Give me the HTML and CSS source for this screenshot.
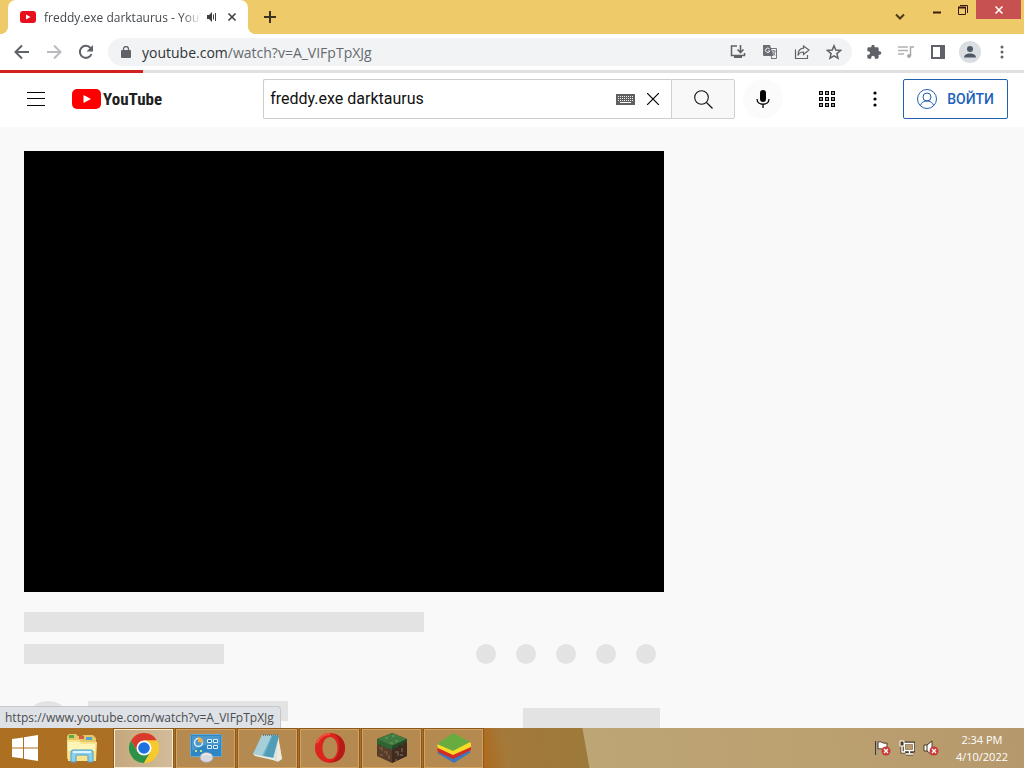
FILE: index.html
```html
<!DOCTYPE html>
<html lang="ru">

<head>
    <meta charset="UTF-8">
    <meta name="viewport" content="width=device-width, initial-scale=1.0">
    <title>freddy.exe darktaurus - YouTube</title>
    <link rel="stylesheet" href="styles.css">
</head>

<body>

    <div class="tabstrip">
        <div class="tab">
            <svg class="favicon" width="16" height="12" viewBox="0 0 16 12"><rect width="16" height="12" rx="3" fill="#e8101c"/><path d="M6 3.5v5L10.500 6z" fill="#fff"/></svg>
            <span class="tabTitle">freddy.exe darktaurus - YouTube</span>
            <button class="iconButton tabButton" aria-label="Mute tab">
                <svg width="12" height="12" viewBox="0 0 12 12"><path d="M1 4h2l3-3v10L3 8H1z" fill="#3c4043"/><path d="M7.500 3.500v5M9.500 2v8" stroke="#3c4043" fill="none"/></svg>
            </button>
            <button class="iconButton tabButton" aria-label="Close tab">
                <svg width="10" height="10" viewBox="0 0 10 10"><path d="M1.500 1.500l7 7M8.500 1.500l-7 7" stroke="#3c4043" stroke-width="1.600"/></svg>
            </button>
        </div>
        <button class="iconButton newTab" aria-label="New tab">
            <svg width="12" height="12" viewBox="0 0 12 12"><path d="M6 0v12M0 6h12" stroke="#3b3222" stroke-width="2"/></svg>
        </button>
        <div class="windowControls">
            <button class="iconButton tabSearch" aria-label="Search tabs">
                <svg width="12" height="8" viewBox="0 0 12 8"><path d="M2 1.500l4 4 4-4" fill="none" stroke="#4c3a18" stroke-width="2"/></svg>
            </button>
            <button class="windowButton" aria-label="Minimize">
                <svg width="10" height="10" viewBox="0 0 10 10"><path d="M1 7.500h8" stroke="#3a1a10" stroke-width="2"/></svg>
            </button>
            <button class="windowButton" aria-label="Restore">
                <svg width="12" height="10" viewBox="0 0 12 10"><path d="M1.500 2.500h7v7h-7zM3 .5h7.500V8" fill="none" stroke="#3a1a10"/><path d="M1 2.500h8" stroke="#3a1a10" stroke-width="2"/></svg>
            </button>
            <button class="windowButton closeWindow" aria-label="Close">
                <svg width="10" height="10" viewBox="0 0 10 10"><path d="M1.500 1.500l7 7M8.500 1.500l-7 7" stroke="#fff" stroke-width="1.600"/></svg>
            </button>
        </div>
    </div>

    <div class="toolbar">
        <button class="iconButton" aria-label="Back">
            <svg width="16" height="16" viewBox="0 0 16 16"><path d="M15 8H2M8 1.500L1.500 8 8 14.500" fill="none" stroke="#5f6368" stroke-width="2"/></svg>
        </button>
        <button class="iconButton" aria-label="Forward">
            <svg width="16" height="16" viewBox="0 0 16 16"><path d="M1 8h13M8 1.500L14.500 8 8 14.500" fill="none" stroke="#b9bbbe" stroke-width="2"/></svg>
        </button>
        <button class="iconButton" aria-label="Reload">
            <svg width="16" height="16" viewBox="0 0 16 16"><path d="M13.500 10A6 6 0 1 1 12.500 4l1.500 1.500" fill="none" stroke="#5f6368" stroke-width="2"/><path d="M15 1v6.500H8.500z" fill="#5f6368"/></svg>
        </button>
        <div class="omnibox">
            <svg class="lock" width="10" height="12" viewBox="0 0 10 12"><rect y="4" width="10" height="8" rx="1" fill="#5f6368"/><path d="M2.500 5V3a2.500 2.500 0 0 1 5 0v2" fill="none" stroke="#5f6368" stroke-width="1.300"/></svg>
            <span class="url"><span class="urlHost">youtube.com</span>/watch?v=A_VIFpTpXJg</span>
            <button class="iconButton" aria-label="Install">
                <svg width="16" height="16" viewBox="0 0 16 16"><path d="M7 2H1.500v9.500h13V9" fill="none" stroke="#5f6368" stroke-width="1.500"/><path d="M4 12h8v2H4z" fill="#5f6368"/><path d="M10.500 1v7M7.500 5.500l3 3 3-3" fill="none" stroke="#5f6368" stroke-width="1.600"/></svg>
            </button>
            <button class="iconButton" aria-label="Translate">
                <svg width="16" height="16" viewBox="0 0 16 16"><path d="M8 4.500h6.500v10H9" fill="none" stroke="#72757a"/><path d="M1 1h7l3.500 11H2a1 1 0 0 1-1-1z" fill="#6b6e73"/><path d="M7.500 5A2.200 2.200 0 1 0 7.800 7H5.800" fill="none" stroke="#f1f3f4"/><path d="M9.500 7h4M11.500 6v1M13 7c0 2-1 3-2.500 4M10.500 8l2.500 3.500M9 12l1 2.500" fill="none" stroke="#72757a"/></svg>
            </button>
            <button class="iconButton" aria-label="Share">
                <svg width="16" height="16" viewBox="0 0 16 16"><path d="M1.500 5.500v9h12V11" fill="none" stroke="#5f6368" stroke-width="1.200"/><path d="M9.500 2l5.500 4-5.500 4.500V8C7 8 5 9 4 11.500 4 7 6 4.500 9.500 4.200z" fill="none" stroke="#5f6368" stroke-width="1.200"/></svg>
            </button>
            <button class="iconButton" aria-label="Bookmark">
                <svg width="16" height="16" viewBox="0 0 16 16"><path d="M8 1.800l1.800 4.300 4.700.4-3.600 3.100 1.100 4.600L8 11.800l-4 2.400 1.100-4.600-3.600-3.100 4.700-.4z" fill="none" stroke="#5f6368" stroke-width="1.500"/></svg>
            </button>
        </div>
        <button class="iconButton" aria-label="Extensions">
            <svg width="16" height="16" viewBox="0 0 24 24"><path d="M20.500 11H19V7a2 2 0 0 0-2-2h-4V3.500a2.500 2.500 0 0 0-5 0V5H4a2 2 0 0 0-2 2v3.800h1.500a2.700 2.700 0 0 1 0 5.400H2V20a2 2 0 0 0 2 2h3.800v-1.500a2.700 2.700 0 0 1 5.400 0V22H17a2 2 0 0 0 2-2v-4h1.500a2.500 2.500 0 0 0 0-5z" fill="#5f6368"/></svg>
        </button>
        <button class="iconButton" aria-label="Media controls">
            <svg width="16" height="16" viewBox="0 0 16 16"><path d="M0 3h10M0 6.500h10M0 10h6" stroke="#b3b0b4" stroke-width="1.500"/><path d="M12.500 12V3H16" fill="none" stroke="#a9a9ac" stroke-width="1.500"/><circle cx="11" cy="12" r="2" fill="#a9a9ac"/></svg>
        </button>
        <button class="iconButton" aria-label="Side panel">
            <svg width="14" height="14" viewBox="0 0 14 14"><path d="M1 1h12v12H1z" fill="#fff" stroke="#5f6368" stroke-width="2"/><path d="M9 1h4v12H9z" fill="#5f6368"/></svg>
        </button>
        <button class="iconButton" aria-label="Profile">
            <svg width="22" height="22" viewBox="0 0 22 22"><circle cx="11" cy="11" r="11" fill="#dadee3"/><circle cx="11" cy="8" r="3" fill="#505967"/><path d="M5 16.500c0-5.500 12-5.500 12 0z" fill="#505967"/></svg>
        </button>
        <button class="iconButton" aria-label="Menu">
            <svg width="4" height="16" viewBox="0 0 4 16"><g fill="#5f6368"><circle cx="2" cy="3" r="1.500"/><circle cx="2" cy="8" r="1.500"/><circle cx="2" cy="13" r="1.500"/></g></svg>
        </button>
    </div>

    <div class="page">
        <div class="progress"><div class="progressValue"></div></div>
        <header class="masthead">
            <button class="guideButton" aria-label="Гид">
                <svg width="18" height="14" viewBox="0 0 18 14"><path d="M0 .5h18M0 6.500h18M0 13.500h18" stroke="#030303"/></svg>
            </button>
            <a class="logo" href="#">
                <svg width="29" height="20" viewBox="0 0 29 20"><rect width="29" height="20" rx="5" fill="#f00"/><path d="M11.500 6v8l7.500-4z" fill="#fff"/></svg>
                <span class="logoText">YouTube</span>
            </a>
            <div class="center">
                <form class="search">
                    <div class="searchBox">
                        <input class="searchInput" type="text" aria-label="Введите запрос" value="freddy.exe darktaurus">
                        <svg class="keyboard" width="19" height="11" viewBox="0 0 19 11"><path d="M0 0h19v11H0z" fill="#606060"/><path d="M2 2.500h15M2 4.500h15M2 6.500h15" stroke="#eee" stroke-dasharray="1 1"/><path d="M4 8.500h11" stroke="#fff"/></svg>
                        <button type="button" class="clearButton" aria-label="Очистить">
                            <svg width="12" height="12" viewBox="0 0 12 12"><path d="M0 0l12 12M12 0L0 12" stroke="#030303" stroke-width="1.200"/></svg>
                        </button>
                    </div>
                    <button type="button" class="searchButton" aria-label="Поиск">
                        <svg width="19" height="19" viewBox="0 0 19 19"><circle cx="7.500" cy="7.500" r="6.800" fill="none" stroke="#111" stroke-width="1.100"/><path d="M12.500 12.500l6 6" stroke="#111" stroke-width="1.200"/></svg>
                    </button>
                </form>
                <button class="roundButton micButton" aria-label="Голосовой поиск">
                    <svg width="14" height="18" viewBox="0 0 14 18"><rect x="4" width="6" height="12" rx="3" fill="#030303"/><path d="M1 9c0 7 12 7 12 0M7 14v4" fill="none" stroke="#030303" stroke-width="1.300"/></svg>
                </button>
            </div>
            <div class="end">
                <button class="roundButton" aria-label="Приложения">
                    <svg width="16" height="16" viewBox="0 0 16 16"><g fill="none" stroke="#030303" stroke-width="1.200"><path d="M.6.6h2.800v2.800H.6zM6.600.6h2.800v2.800H6.600zM12.600.6h2.800v2.800h-2.800z"/><path d="M.6 6.600h2.800v2.800H.6zM6.600 6.600h2.800v2.800H6.600zM12.600 6.600h2.800v2.800h-2.800z"/><path d="M.6 12.600h2.800v2.800H.6zM6.600 12.600h2.800v2.800H6.600zM12.600 12.600h2.800v2.800h-2.800z"/></g></svg>
                </button>
                <button class="roundButton" aria-label="Настройки">
                    <svg width="4" height="16" viewBox="0 0 4 16"><g fill="#030303"><circle cx="2" cy="2" r="1.600"/><circle cx="2" cy="8" r="1.600"/><circle cx="2" cy="14" r="1.600"/></g></svg>
                </button>
                <a class="signIn" href="#">
                    <svg width="20" height="20" viewBox="0 0 20 20"><g fill="none" stroke="#2260b0"><circle cx="10" cy="10" r="9.500"/><circle cx="10" cy="8" r="4"/><path d="M3.500 16.500c1-6 12-6 13 0"/></g></svg>
                    <span>ВОЙТИ</span>
                </a>
            </div>
        </header>

        <main class="watch">
            <div class="primary">
                <div class="player"></div>
                <div class="bone boneTitle"></div>
                <div class="metaRow">
                    <div class="bone boneInfo"></div>
                    <div class="actions">
                        <div class="boneAction"></div>
                        <div class="boneAction"></div>
                        <div class="boneAction"></div>
                        <div class="boneAction"></div>
                        <div class="boneAction"></div>
                    </div>
                </div>
                <div class="ownerRow">
                    <div class="boneAvatar"></div>
                    <div class="bone boneName"></div>
                    <div class="boneSubscribe"></div>
                </div>
            </div>
        </main>
        <div class="statusBubble">https://www.youtube.com/watch?v=A_VIFpTpXJg</div>
    </div>

    <div class="taskbar">
        <button class="startButton" aria-label="Start">
            <svg width="28" height="26" viewBox="0 0 28 26"><path d="M1 4l11-1.500V12.500H1zM13 2.300L27 0v12.500H13zM1 13.500h11v10L1 22zM13 13.500h14V26l-14-2.300z" fill="#fff"/></svg>
        </button>
        <button class="task taskPinned" aria-label="File Explorer">
            <svg width="32" height="30" viewBox="0 0 32 30"><path d="M1 3l2-2h7l2 2h4l2-1h9l3 3v21H1z" fill="#e5c668"/><path d="M3 2h5v3H3z" fill="#58aa4c"/><path d="M13 3h5v3h-5z" fill="#d65b45"/><path d="M20 4h6v3h-6z" fill="#52a6c7"/><path d="M1 7h12l2 2h16l-1 19H2z" fill="#f8e48f"/><path d="M2 9h11l2 2h14v7H2z" fill="#fff5b6"/><path d="M5 29V19q0-2 2-2h18q2 0 2 2v10h-5v-6q0-1-1-1H11q-1 0-1 1v6z" fill="#8cd0ed" stroke="#4c9fc8"/><path d="M7 19h18" stroke="#dcf5ff" stroke-width="2"/></svg>
        </button>
        <button class="task taskActive" aria-label="Google Chrome">
            <svg width="30" height="30" viewBox="0 0 30 30"><circle cx="15" cy="15" r="15" fill="#f6c92e"/><path d="M2 7.500A15 15 0 0 1 28 7.500H15L8.500 18.800z" fill="#d93a2d"/><path d="M2 7.500A15 15 0 0 0 15 30l6.500-11.200H8.500z" fill="#2d9147"/><path d="M28 7.500H15v7.500l6.500 3.800L15 30A15 15 0 0 0 28 7.500z" fill="#f6c92e"/><circle cx="15" cy="15" r="7.500" fill="#fff"/><circle cx="15" cy="15" r="5.800" fill="#1e72df"/></svg>
        </button>
        <button class="task" aria-label="Control Panel">
            <svg width="32" height="30" viewBox="0 0 32 30"><rect x=".5" y="1.500" width="31" height="22" rx="1" fill="#2f86c4" stroke="#69a9d0"/><path d="M2 3h28v9Q15 10 2 18z" fill="#4b99cc"/><circle cx="8.500" cy="9.500" r="4" fill="none" stroke="#d8f1fb" stroke-width="1.500"/><path d="M8 9V4a5 5 0 0 1 5 6z" fill="#efae49"/><path d="M17.500 6.500h4v3h-4zM23.500 6.500h4v3h-4zM17.500 12.500h4v3h-4zM23.500 12.500h4v3h-4z" fill="#2b78b8" stroke="#d8f1fb"/><path d="M5 18h2M10 18h2" stroke="#bee58b" stroke-width="2"/><ellipse cx="16.500" cy="24.500" rx="6.500" ry="4.800" fill="#d9d9e2" stroke="#aaa9b3"/><path d="M12 22q4-3 9 0" fill="none" stroke="#fff"/></svg>
        </button>
        <button class="task" aria-label="Notepad">
            <svg width="32" height="30" viewBox="0 0 32 30"><path d="M26 2l4 24-4 3-9-4z" fill="#dce3df"/><path d="M26 4l4 22-5 2z" fill="#f1ead9"/><path d="M10 2h17l-6 23L1 21z" fill="#72b5c8"/><path d="M10 2h10L10 23l-9-2z" fill="#a6cfda"/><path d="M20 3h7l-6 22-9-2z" fill="#519db7"/><path d="M1 21l20 4 4 3-22-5z" fill="#e6eee9"/><path d="M11 2h16" stroke="#697e83" stroke-width="2" stroke-dasharray="1 1"/></svg>
        </button>
        <button class="task" aria-label="Opera">
            <svg width="30" height="30" viewBox="0 0 30 30"><path fill-rule="evenodd" d="M15 0a15 15 0 1 0 0 30 15 15 0 0 0 0-30zm0 4c4.500 0 7.500 5 7.500 11S19.500 26 15 26 7.500 21 7.500 15 10.500 4 15 4z" fill="#dc251e"/><path d="M19 1c5 3 6 9 5 16s-5 11-9 12c10 1 15-6 15-14S25 2 19 1z" fill="#b71b18"/><path d="M2 10Q6 1 15 1" fill="none" stroke="#f64e3d" stroke-width="2"/></svg>
        </button>
        <button class="task" aria-label="Minecraft">
            <svg width="32" height="32" viewBox="0 0 32 32"><path d="M16 1l15 6v17l-15 7-15-7V7z" fill="#573b2b"/><path d="M16 13l15-6v17l-15 7z" fill="#3e2b22"/><path d="M16 1l15 6-15 7L1 7z" fill="#3f7a40"/><path d="M1 7l15 7v4l-3-2-2 1-3-3-2 1-2-3-3 1z" fill="#2d6634"/><path d="M31 7l-15 7v4l3-3 2 1 3-4 2 2 2-4 3 1z" fill="#234d29"/><path d="M9 6h3M16 4h3M19 9h3M14 11h3" stroke="#5e9553" stroke-width="1.500"/><path d="M3 16h3v3M8 20h3v3M4 23h3M13 23v4M19 20h3v4M26 16v4M24 23h3M19 28h2" fill="none" stroke="#79593f" stroke-width="1.500"/></svg>
        </button>
        <button class="task" aria-label="BlueStacks">
            <svg width="34" height="30" viewBox="0 0 34 30"><path d="M0 20l17-9 17 8-17 11z" fill="#3b78bd"/><path d="M0 16l17-9 17 7v3L16 26 1 19z" fill="#d42c24"/><path d="M0 12l17-8 17 6v4L16 22 1 15z" fill="#f7dc27"/><path d="M0 11L16 0l17 9-17 9z" fill="#68ac40"/></svg>
        </button>
        <div class="tray">
            <svg width="16" height="16" viewBox="0 0 16 16"><path d="M1.500 1v14" stroke="#4a3824" stroke-width="3"/><path d="M2 1v14" stroke="#fff"/><path d="M3 2c4-1 4 2 9 1v6c-5 1-5-1-9 0z" fill="#fff" stroke="#4a3824"/><circle cx="11" cy="11" r="4.500" fill="#cb3936"/><path d="M9 9l4 4M13 9l-4 4" stroke="#fff" stroke-width="1.400"/></svg>
            <svg width="16" height="16" viewBox="0 0 16 16"><path d="M5 3h10v8H5zM7 14h7M10.500 11v3M3 6v6h3" fill="none" stroke="#4a3824" stroke-width="3"/><path d="M5.500 3.500h9v7h-9zM7 14h7M10.500 11v3M3 6v6h3" fill="none" stroke="#fff" stroke-width="1.400"/><path d="M1 1h4v5H1z" fill="#4a3824" stroke="#fff"/></svg>
            <svg width="16" height="16" viewBox="0 0 16 16"><path d="M1 5h3l5-4v14l-5-4H1z" fill="#fff" stroke="#4a3824"/><path d="M4 5v6" stroke="#4a3824"/><circle cx="11" cy="11" r="4.500" fill="#cb3936"/><path d="M9 9l4 4M13 9l-4 4" stroke="#fff" stroke-width="1.400"/></svg>
        </div>
        <div class="clock">
            <div>2:34 PM</div>
            <div>4/10/2022</div>
        </div>
    </div>

</body>

</html>
```

FILE: styles.css
```css
* {
    box-sizing: border-box;
}

body {
    margin: 0;
    height: 100vh;
    display: flex;
    flex-direction: column;
    overflow: hidden;
    font-family: 'Open Sans', 'Noto Sans', sans-serif;
}

button {
    padding: 0;
    border: none;
    background: none;
    display: flex;
    align-items: center;
    justify-content: center;
    flex-shrink: 0;
}

a {
    text-decoration: none;
}

svg {
    flex-shrink: 0;
}

.iconButton {
    width: 28px;
    height: 28px;
}

/* tabs */

.tabstrip {
    height: 34px;
    flex-shrink: 0;
    display: flex;
    padding: 0 3px 0 8px;
    background: #efca68;
}

.tab {
    position: relative;
    width: 240px;
    display: flex;
    align-items: center;
    padding: 0 6px 0 12px;
    background: #fff;
    border-radius: 8px 8px 0 0;
}

.tab::before,
.tab::after {
    content: '';
    position: absolute;
    bottom: 0;
    width: 8px;
    height: 8px;
}

.tab::before {
    left: -8px;
    background: radial-gradient(circle at 0 0, transparent 8px, #fff 8px);
}

.tab::after {
    right: -8px;
    background: radial-gradient(circle at 100% 0, transparent 8px, #fff 8px);
}

.tabTitle {
    flex: 1;
    min-width: 0;
    margin-left: 8px;
    font-size: 12px;
    color: #45494d;
    white-space: nowrap;
    overflow: hidden;
    mask-image: linear-gradient(to left, transparent, #000 20px);
}

.tabButton {
    width: 20px;
}

.newTab {
    margin: 3px 0 0 8px;
}

.windowControls {
    margin-left: auto;
    display: flex;
}

.tabSearch {
    margin-top: 3px;
    margin-right: 10px;
}

.windowButton {
    width: 26px;
    height: 19px;
}

.closeWindow {
    width: 45px;
    background: #c75050;
}

/* toolbar */

.toolbar {
    height: 36px;
    flex-shrink: 0;
    display: flex;
    align-items: center;
    gap: 4px;
    padding: 0 8px;
    background: #fff;
}

.omnibox {
    flex: 1;
    min-width: 0;
    height: 28px;
    display: flex;
    align-items: center;
    gap: 4px;
    margin: 0 4px;
    padding: 0 4px 0 13px;
    border-radius: 14px;
    background: #f1f3f4;
}

.url {
    flex: 1;
    min-width: 0;
    margin-left: 7px;
    font-size: 14px;
    color: #666a6e;
    white-space: nowrap;
    overflow: hidden;
}

.urlHost {
    color: #303336;
}

/* page */

.page {
    position: relative;
    flex: 1;
    min-height: 0;
    overflow: hidden;
    background: #f9f9f9;
    font-family: Roboto, sans-serif;
}

.progress {
    position: absolute;
    top: 0;
    left: 0;
    right: 0;
    height: 3px;
    background: #e0e0e0;
}

.progressValue {
    width: 14%;
    height: 3px;
    background: #d2201f;
}

.masthead {
    height: 57px;
    display: flex;
    align-items: center;
    padding: 1px 16px 0;
    background: #fff;
}

.guideButton,
.roundButton {
    width: 40px;
    height: 40px;
    border-radius: 50%;
}

.logo {
    display: flex;
    align-items: center;
    gap: 2px;
    margin-left: 16px;
    color: #212121;
}

.logoText {
    font-family: 'Liberation Sans Narrow', 'Roboto Condensed', Roboto, sans-serif;
    font-size: 17px;
    font-weight: 700;
    line-height: 20px;
}

.center {
    flex: 0 1 520px;
    min-width: 0;
    display: flex;
    gap: 8px;
    margin: 0 24px 0 auto;
}

.search {
    flex: 1;
    min-width: 0;
    display: flex;
}

.searchBox {
    flex: 1;
    min-width: 0;
    height: 40px;
    display: flex;
    align-items: center;
    padding: 0 6px;
    border: 1px solid #ccc;
    border-right: none;
    border-radius: 2px 0 0 2px;
    background: #fff;
}

.searchInput {
    flex: 1;
    min-width: 0;
    padding: 0;
    border: none;
    outline: none;
    font-family: Roboto, sans-serif;
    font-size: 16px;
    line-height: 24px;
    color: #111;
}

.clearButton {
    width: 24px;
    height: 24px;
    margin-left: 6px;
}

.searchButton {
    width: 64px;
    height: 40px;
    border: 1px solid #d0d0d0;
    border-radius: 0 2px 2px 0;
    background: #f8f8f8;
}

.micButton {
    background: #fbfbfb;
}

.end {
    display: flex;
    gap: 8px;
}

.signIn {
    height: 40px;
    display: flex;
    align-items: center;
    gap: 10px;
    padding: 0 13px;
    border: 1px solid #2260b0;
    border-radius: 2px;
    font-size: 14px;
    font-weight: 500;
    color: #1c62b9;
}

.watch {
    padding: 24px;
}

.primary {
    max-width: 640px;
}

.player {
    height: 441px;
    background: #000;
}

.bone {
    height: 20px;
    background: #e3e3e3;
}

.boneTitle {
    width: 400px;
    margin-top: 20px;
}

.metaRow {
    display: flex;
    justify-content: space-between;
    margin-top: 12px;
    padding-right: 8px;
}

.boneInfo {
    width: 200px;
}

.actions {
    display: flex;
    gap: 20px;
}

.boneAction {
    width: 20px;
    height: 20px;
    border-radius: 50%;
    background: #e3e3e3;
}

.ownerRow {
    display: flex;
    margin-top: 37px;
    padding-right: 4px;
}

.boneAvatar {
    width: 48px;
    height: 48px;
    margin-right: 16px;
    border-radius: 50%;
    background: #e3e3e3;
}

.boneName {
    width: 200px;
}

.boneSubscribe {
    width: 137px;
    height: 36px;
    margin: 7px 0 0 auto;
    background: #e3e3e3;
}

.statusBubble {
    position: absolute;
    left: 0;
    bottom: 0;
    padding: 0 6px 0 5px;
    border: 1px solid #c4c6c9;
    border-width: 1px 1px 0 0;
    border-radius: 0 4px 0 0;
    background: #dee1e6;
    font-family: 'Open Sans', 'Noto Sans', sans-serif;
    font-size: 12px;
    line-height: 21px;
    color: #4a4d51;
}

/* taskbar */

.taskbar {
    height: 40px;
    flex-shrink: 0;
    display: flex;
    align-items: center;
    gap: 3px;
    padding-right: 16px;
    background: linear-gradient(80deg, #ad7021 0, #a96e26 320px, #ad6c20 480px, #a4793a 500px, #9c7a39 580px, #bda576 581px, #bca170 800px, #b5986c 100%);
}

.startButton {
    width: 49px;
    height: 40px;
}

.task {
    width: 59px;
    height: 39px;
    border: 1px solid #d3a261;
    outline: 1px solid #8c5a1d;
    background: #b58a50;
}

.taskPinned {
    border-color: transparent;
    outline: none;
    background: none;
}

.taskActive {
    border-color: #f8ebd3;
    background: linear-gradient(to right, #c5a77c, #d2bc9b);
}

.tray {
    display: flex;
    gap: 8px;
    margin-left: auto;
}

.clock {
    margin-left: 14px;
    font-size: 11px;
    line-height: 17px;
    text-align: center;
    color: #fff;
}
```
